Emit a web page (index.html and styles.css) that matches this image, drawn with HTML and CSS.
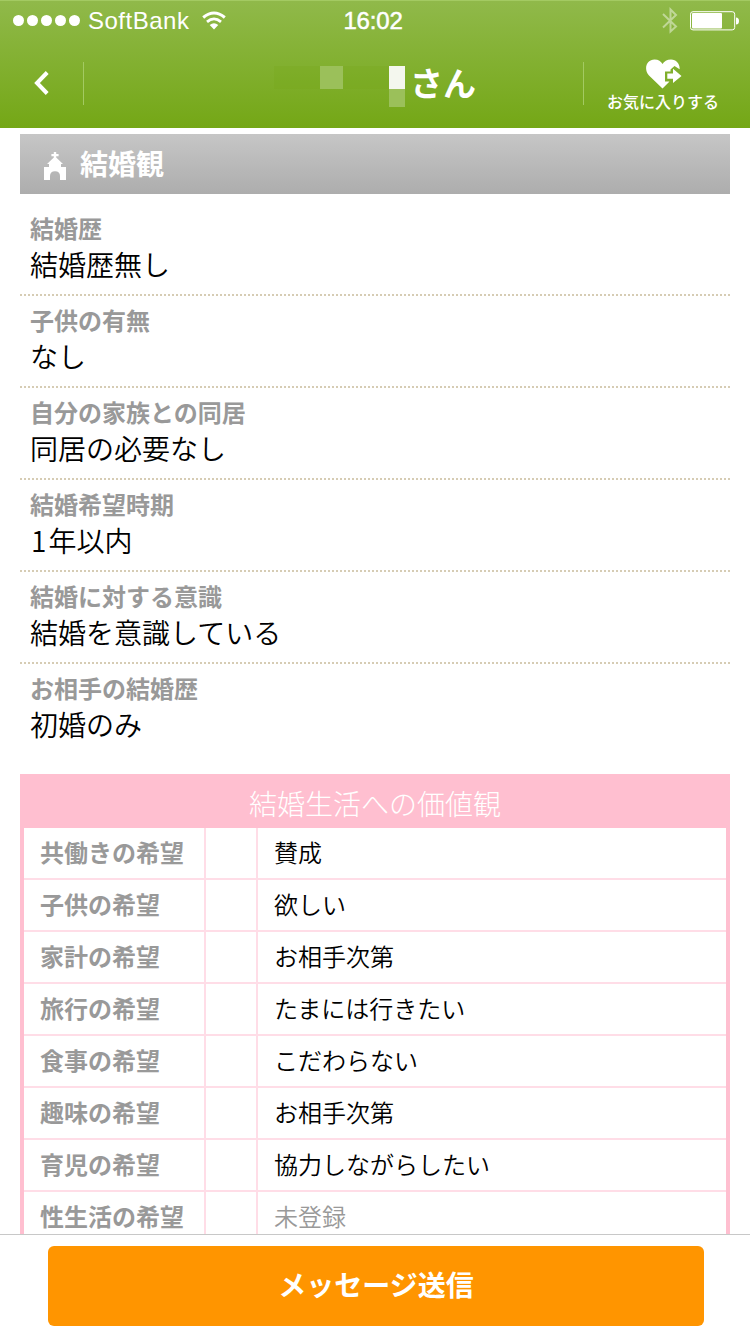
FILE: index.html
```html
<!DOCTYPE html>
<html lang="ja">
<head>
    <meta charset="UTF-8">
    <meta name="viewport" content="width=device-width, initial-scale=1.0">
    <title>結婚観</title>
    <link rel="stylesheet" href="styles.css">
</head>
<body>

    <header class="header">
        <div class="status">
            <div class="status-left">
                <div class="signal"><i></i><i></i><i></i><i></i><i></i></div>
                <span class="carrier">SoftBank</span>
                <svg class="wifi" width="26" height="20" viewBox="0 0 26 20">
                    <path d="M2.2 6.5Q13 -2.4 23.8 6.5" fill="none" stroke="#fff" stroke-width="3"/>
                    <path d="M6 10.8Q13 5 20 10.8" fill="none" stroke="#fff" stroke-width="2.8"/>
                    <path d="M8.7 14Q13 10.5 17.3 14L13 18.5Z" fill="#fff"/>
                </svg>
            </div>
            <span class="time">16:02</span>
            <div class="status-right">
                <svg width="16" height="28" viewBox="0 0 16 28">
                    <path d="M1 7L14 19.5L8.5 24.5V2.5L14 8L1 20.5" fill="none" stroke="#fff" stroke-width="2" opacity=".45"/>
                </svg>
                <svg width="50" height="20" viewBox="0 0 50 20">
                    <rect x=".5" y=".7" width="44.2" height="18.2" rx="2.5" fill="none" stroke="#fff" stroke-width="1"/>
                    <rect x="2" y="2" width="30" height="15.5" rx="1" fill="#fff"/>
                    <path d="M46 6.5Q49 6.5 49 10T46 13.5Z" fill="#fff"/>
                </svg>
            </div>
        </div>
        <nav class="nav">
            <a class="back">
                <svg width="16" height="24" viewBox="0 0 16 24">
                    <path d="M13.2 1.5L3 12L13.2 22.5" fill="none" stroke="#fff" stroke-width="4"/>
                </svg>
            </a>
            <div class="title">
                <svg class="mosaic" width="131" height="41" viewBox="0 0 131 41">
                    <rect width="131" height="23" fill="#74a716" opacity=".2"/>
                    <rect x="46" width="23" height="23" fill="#9bc05a"/>
                    <rect x="115" width="16" height="23" fill="#f4f7ee"/>
                    <rect x="115" y="23" width="16" height="18" fill="#9bc05a"/>
                </svg>
                <span>さん</span>
            </div>
            <a class="favorite">
                <svg width="36" height="30" viewBox="0 0 36 30">
                    <path d="M16.5 29.5L3 16.5C-3 9.5 1 .5 8.5 .5C12.5 .5 15 2.3 16.5 5C18 2.3 21 .5 25 .5C30.5 .5 34 5 33.6 10.2L28.5 7L24.5 10.5V12.5H19V22.5H23.5Z" fill="#fff"/>
                    <path d="M21.3 14.6H27V9.8L35.5 17L27 24V19.8H21.3Z" fill="#fff"/>
                </svg>
                <span>お気に入りする</span>
            </a>
        </nav>
    </header>

    <main class="content">
        <h2 class="heading">
            <svg width="22" height="28" viewBox="0 0 22 28">
                <path d="M9.8 0H12.2V2H14.6V4.2H12.2V5.5L19 12H17V15H22V28H16V24Q16 19.2 11 19.2T6 24V28H0V15H5V12H3L9.8 5.5V4.2H7.4V2H9.8Z" fill="#fff"/>
            </svg>
            <span>結婚観</span>
        </h2>

        <dl class="profile">
            <div class="item"><dt>結婚歴</dt><dd>結婚歴無し</dd></div>
            <div class="item"><dt>子供の有無</dt><dd>なし</dd></div>
            <div class="item"><dt>自分の家族との同居</dt><dd>同居の必要なし</dd></div>
            <div class="item"><dt>結婚希望時期</dt><dd><span class="num">1</span>年以内</dd></div>
            <div class="item"><dt>結婚に対する意識</dt><dd>結婚を意識している</dd></div>
            <div class="item"><dt>お相手の結婚歴</dt><dd>初婚のみ</dd></div>
        </dl>

        <section class="values">
            <h3>結婚生活への価値観</h3>
            <table>
                <tr><th>共働きの希望</th><td class="mark"></td><td>賛成</td></tr>
                <tr><th>子供の希望</th><td class="mark"></td><td>欲しい</td></tr>
                <tr><th>家計の希望</th><td class="mark"></td><td>お相手次第</td></tr>
                <tr><th>旅行の希望</th><td class="mark"></td><td>たまには行きたい</td></tr>
                <tr><th>食事の希望</th><td class="mark"></td><td>こだわらない</td></tr>
                <tr><th>趣味の希望</th><td class="mark"></td><td>お相手次第</td></tr>
                <tr><th>育児の希望</th><td class="mark"></td><td>協力しながらしたい</td></tr>
                <tr><th>性生活の希望</th><td class="mark"></td><td class="empty">未登録</td></tr>
            </table>
        </section>
    </main>

    <footer class="footer">
        <button class="button">メッセージ送信</button>
    </footer>

</body>
</html>
```
FILE: styles.css
```css
* {
    box-sizing: border-box;
}
body {
    margin: 0;
    height: 1334px;
    display: flex;
    flex-direction: column;
    overflow: hidden;
    background: #fff;
    color: #000;
    font-family: "Noto Sans CJK JP", sans-serif;
}
svg {
    display: block;
    flex: none;
}

/* header */
.header {
    height: 128px;
    flex: none;
    border-top: 1px solid #a3ca62;
    background: linear-gradient(#90b94a, #74a716);
    color: #fff;
}
.status {
    height: 39px;
    display: grid;
    grid-template-columns: 1fr auto 1fr;
    align-items: center;
    padding: 0 10px 0 13px;
    font-family: "Liberation Sans", Arial, sans-serif;
    font-size: 24px;
}
.status-left,
.status-right {
    display: flex;
    align-items: center;
}
.status-right {
    justify-content: flex-end;
    gap: 12px;
}
.signal {
    display: flex;
    gap: 3px;
}
.signal i {
    width: 11px;
    height: 11px;
    border-radius: 50%;
    background: #fff;
}
.carrier {
    margin-left: 8px;
    letter-spacing: 0.5px;
}
.wifi {
    margin-left: 12px;
}
.time {
    margin-right: 7px;
    letter-spacing: -0.2px;
    -webkit-text-stroke: 0.5px #fff;
}
.nav {
    height: 86px;
    display: flex;
    align-items: center;
}
.back {
    width: 84px;
    height: 43px;
    padding-left: 34px;
    display: flex;
    align-items: center;
    border-right: 1px solid #a3ca62;
}
.title {
    flex: 1;
    display: flex;
    align-items: center;
    padding-left: 190px;
    font-size: 33px;
    font-weight: 700;
    line-height: 43px;
}
.title span {
    margin: -2px 0 0 5px;
}
.mosaic {
    margin-top: 7px;
}
.favorite {
    width: 167px;
    height: 43px;
    display: flex;
    flex-direction: column;
    align-items: center;
    justify-content: center;
    padding: 5px 6px 0 0;
    border-left: 1px solid #a3ca62;
    font-size: 16px;
    font-weight: 500;
    line-height: 24px;
    white-space: nowrap;
}
.favorite span {
    margin-right: 2px;
}

/* profile */
.content {
    flex: 1;
    min-height: 0;
    overflow: hidden;
    padding: 6px 20px 0;
}
.heading {
    height: 60px;
    margin: 0;
    padding: 0 0 2px 24px;
    display: flex;
    align-items: center;
    gap: 14px;
    background: linear-gradient(#c6c6c6, #adadad);
    color: #fff;
    font-size: 28px;
    line-height: 40px;
}
.heading svg {
    margin-top: 5px;
}
.profile {
    margin: 0;
    padding-top: 10px;
}
.item {
    height: 92px;
    padding: 6px 10px 0;
    border-bottom: 2px dotted #d6ccb4;
}
.item:last-child {
    border-bottom: none;
}
.item dt {
    color: #999;
    font-size: 24px;
    font-weight: 600;
    line-height: 36px;
}
.item dd {
    margin: 0;
    font-size: 28px;
    font-weight: 350;
    line-height: 37px;
}
.item .num {
    margin: 0 2px 0 1px;
}

/* values table */
.values {
    margin-top: 18px;
    border: 4px solid #ffbfd0;
    border-top: none;
}
.values h3 {
    height: 54px;
    margin: 0;
    background: #ffbfd0;
    color: #fff;
    font-size: 28px;
    font-weight: 300;
    line-height: 58px;
    text-align: center;
}
.values table {
    width: 100%;
    table-layout: fixed;
    border-spacing: 0;
    font-size: 24px;
}
.values th,
.values td {
    height: 52px;
    padding: 0 16px 2px;
    border-bottom: 2px solid #ffdde7;
    line-height: 36px;
    text-align: left;
    white-space: nowrap;
}
.values th {
    width: 182px;
    border-right: 2px solid #ffdde7;
    color: #999;
    font-weight: 600;
}
.values td {
    font-weight: 350;
}
.values .mark {
    width: 52px;
    border-right: 2px solid #ffdde7;
}
.values .empty {
    color: #999;
}

/* footer */
.footer {
    height: 100px;
    flex: none;
    padding: 11px 46px 0 48px;
    border-top: 1px solid #c8c8c8;
    background: #fff;
}
.button {
    display: block;
    width: 100%;
    height: 80px;
    padding: 0 0 4px;
    border: none;
    border-radius: 6px;
    background: #ff9500;
    color: #fff;
    font-family: inherit;
    font-size: 28px;
    font-weight: 700;
}
```
